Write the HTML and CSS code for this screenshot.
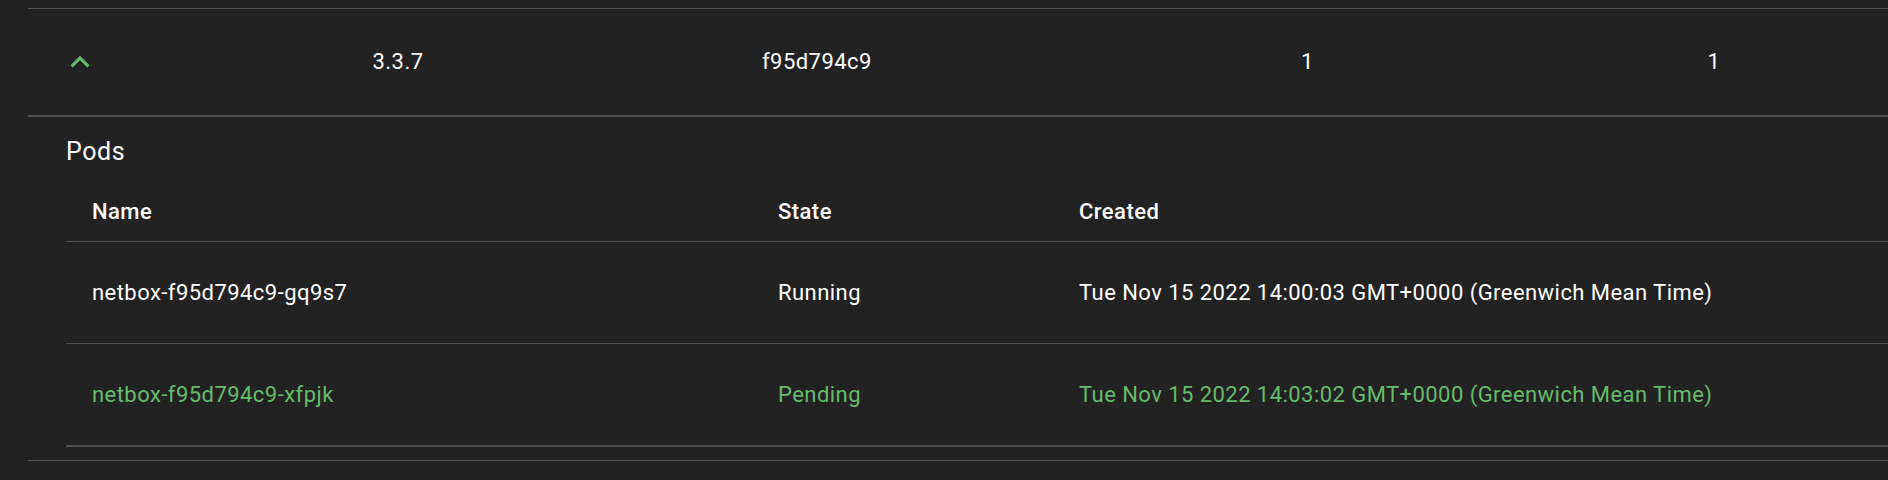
FILE: index.html
```html
<!DOCTYPE html>
<html lang="en">
<head>
<meta charset="utf-8">
<title>Deployments</title>
<link rel="stylesheet" href="styles.css">
</head>
<body>
<div class="outer">
  <div class="outer-row">
    <div class="cell cell-icon">
      <button class="icon-btn" aria-label="collapse row">
        <svg viewBox="0 0 24 24" width="38" height="38" aria-hidden="true"><path d="M7.41 15.41 12 10.83l4.59 4.58L18 14l-6-6-6 6z"/></svg>
      </button>
    </div>
    <div class="cell">3.3.7</div>
    <div class="cell">f95d794c9</div>
    <div class="cell">1</div>
    <div class="cell">1</div>
  </div>
  <div class="detail">
    <h6 class="detail-title">Pods</h6>
    <div class="pods">
      <div class="pods-row pods-head">
        <div class="pcell">Name</div>
        <div class="pcell">State</div>
        <div class="pcell">Created</div>
      </div>
      <div class="pods-row">
        <div class="pcell">netbox-f95d794c9-gq9s7</div>
        <div class="pcell">Running</div>
        <div class="pcell">Tue Nov 15 2022 14:00:03 GMT+0000 (Greenwich Mean Time)</div>
      </div>
      <div class="pods-row pods-row-last is-pending">
        <div class="pcell">netbox-f95d794c9-xfpjk</div>
        <div class="pcell">Pending</div>
        <div class="pcell">Tue Nov 15 2022 14:03:02 GMT+0000 (Greenwich Mean Time)</div>
      </div>
    </div>
  </div>
</div>
</body>
</html>
```
FILE: styles.css
```css
html, body {
  margin: 0;
  padding: 0;
  background: #222222;
}
body {
  font-family: Roboto, "Liberation Sans", sans-serif;
  color: #ffffff;
  overflow: hidden;
  height: 480px;
}
.outer {
  margin: 8px 0 0 28px;
  border-top: 1px solid #515151;
}
.outer-row {
  display: grid;
  grid-template-columns: 322.5px 389.5px 539px 406.5px 1fr;
  align-items: center;
  padding: 23px 0;
  border-bottom: 2px solid #515151;
}
.cell {
  padding-left: 22px;
  font-size: 22px;
  letter-spacing: 0.45px;
  line-height: 30px;
  white-space: nowrap;
}
.icon-btn {
  display: flex;
  width: 60px;
  height: 60px;
  padding: 11px;
  border: 0;
  margin: 0;
  background: transparent;
  align-items: center;
  justify-content: center;
  box-sizing: border-box;
}
.icon-btn svg {
  display: block;
  fill: #66bb6a;
}
.detail {
  padding: 20px 0 13px 38px;
  border-bottom: 1px solid #515151;
}
.detail-title {
  margin: 0;
  font-size: 25px;
  font-weight: 400;
  letter-spacing: 0.6px;
  line-height: 29.7px;
}
.pods {
  margin-top: 30px;
}
.pods-row {
  display: grid;
  grid-template-columns: 686px 301px 1fr;
  padding: 36px 0 35px;
  border-bottom: 1px solid #515151;
}
.pods-head {
  padding: 0 0 14px;
  font-weight: 500;
}
.pods-row-last {
  border-bottom-width: 2px;
}
.pcell {
  padding-left: 26px;
  font-size: 22px;
  letter-spacing: 0.45px;
  line-height: 30px;
  white-space: nowrap;
}
.is-pending .pcell {
  color: #66bb6a;
}
```
